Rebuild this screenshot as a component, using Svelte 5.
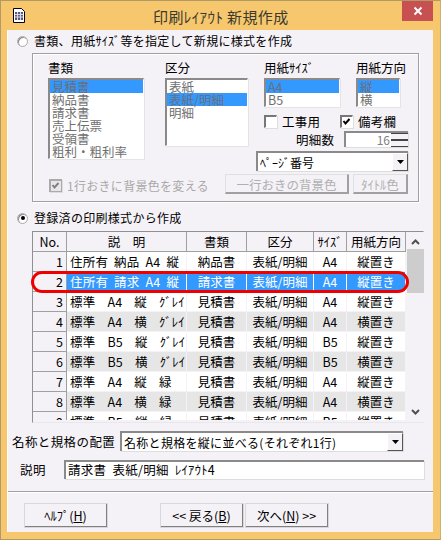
<script>
  const kinds = ['見積書', '納品書', '請求書', '売上伝票', '受領書', '粗利・粗利率'];
  const sections = ['表紙', '表紙/明細', '明細'];
  const rows = [
    ['1', '住所有 納品 A4 縦', '納品書', 'A4', '縦置き'],
    ['2', '住所有 請求 A4 縦', '請求書', 'A4', '縦置き'],
    ['3', '標準  A4  縦  ｸﾞﾚｲ', '見積書', 'A4', '縦置き'],
    ['4', '標準  A4  横  ｸﾞﾚｲ', '見積書', 'A4', '横置き'],
    ['5', '標準  B5  縦  ｸﾞﾚｲ', '見積書', 'B5', '縦置き'],
    ['6', '標準  B5  横  ｸﾞﾚｲ', '見積書', 'B5', '横置き'],
    ['7', '標準  A4  縦  緑', '見積書', 'A4', '縦置き'],
    ['8', '標準  A4  横  緑', '見積書', 'A4', '横置き'],
    ['9', '標準  B5  縦  緑', '見積書', 'B5', '縦置き']
  ];
</script>

<div class="window">
  <header class="titlebar">
    <svg class="appicon" width="14" height="15" viewBox="0 0 14 15">
      <path d="M1.500.500h8l3 3v11h-11z" fill="#fff" stroke="#000"/>
      <rect x="3" y="4" width="8" height="8" fill="#5a5a78"/>
      <path d="M3 6.500h8M3 9h8M5.500 4v8M8.500 4v8" stroke="#d8d8e8" stroke-width="1"/>
    </svg>
    <div class="title">印刷ﾚｲｱｳﾄ 新規作成</div>
    <div class="close">
      <svg width="10" height="10" viewBox="0 0 10 10"><path d="M1.500 1.500l7 7M8.500 1.500l-7 7" stroke="#fff" stroke-width="2"/></svg>
    </div>
  </header>

  <main class="client">
    <label class="radio-row first"><span class="radio"></span>書類、用紙ｻｲｽﾞ等を指定して新規に様式を作成</label>

    <section class="group">
      <div class="lists">
        <div class="col w-kind">
          <div class="cap">書類</div>
          <div class="list h-kind">
            {#each kinds as k, i}<div class="opt" class:sel={i === 0}>{k}</div>{/each}
          </div>
        </div>
        <div class="col w-sec">
          <div class="cap">区分</div>
          <div class="list h-sec">
            {#each sections as k, i}<div class="opt" class:sel={i === 1}>{k}</div>{/each}
          </div>
        </div>
        <div class="side">
          <div class="side-top">
            <div class="col w-size">
              <div class="cap">用紙ｻｲｽﾞ</div>
              <div class="list h-size">
                <div class="opt sel latin">A4</div>
                <div class="opt latin">B5</div>
              </div>
            </div>
            <div class="col w-dir">
              <div class="cap">用紙方向</div>
              <div class="list h-size">
                <div class="opt sel">縦</div>
                <div class="opt">横</div>
              </div>
            </div>
          </div>
          <div class="checks">
            <label class="check-row w-koji"><span class="check"></span>工事用</label>
            <label class="check-row"><span class="check"><svg width="11" height="11" viewBox="0 0 11 11"><path d="M2.500 5l2 2.500L8.500 3" fill="none" stroke="#000" stroke-width="2"/></svg></span>備考欄</label>
          </div>
          <div class="count-row">
            <span class="count-label">明細数</span>
            <div class="spin"><span class="spin-val">16</span><span class="spin-btns"><i></i><i></i></span></div>
          </div>
          <div class="combo page-combo">
            <span class="combo-text">ﾍﾟｰｼﾞ番号</span>
            <span class="combo-btn"><svg width="7" height="4" viewBox="0 0 7 4"><path d="M0 0h7L3.500 4z" fill="#000"/></svg></span>
          </div>
        </div>
      </div>
      <div class="alt-row">
        <label class="alt-check">
          <span class="check disabled"><svg width="11" height="11" viewBox="0 0 11 11"><path d="M2.500 5l2 2.500L8.500 3" fill="none" stroke="#808080" stroke-width="2"/></svg></span>1行おきに背景色を変える
        </label>
        <button class="btn dis wide" disabled>一行おきの背景色</button>
        <button class="btn dis narrow" disabled>ﾀｲﾄﾙ色</button>
      </div>
    </section>

    <label class="radio-row second"><span class="radio on"></span>登録済の印刷様式から作成</label>

    <section class="table">
      <div class="grid-area">
        <div class="tr head">
          <div class="td">No.</div>
          <div class="td">説　明</div>
          <div class="td">書類</div>
          <div class="td">区分</div>
          <div class="td">ｻｲｽﾞ</div>
          <div class="td">用紙方向</div>
        </div>
        {#each rows as r, i}
          <div class="tr" class:alt={i > 1 && i % 2 === 1} class:selected={i === 1}>
            <div class="td no">{r[0]}</div>
            <div class="td name">{r[1]}</div>
            <div class="td">{r[2]}</div>
            <div class="td">表紙/明細</div>
            <div class="td">{r[3]}</div>
            <div class="td">{r[4]}</div>
          </div>
        {/each}
      </div>
      <div class="scrollbar">
        <svg class="arrow" width="9" height="6" viewBox="0 0 9 6"><path d="M1 5l3.500-3.500L8 5" fill="none" stroke="#505050" stroke-width="2"/></svg>
        <div class="thumb"></div>
        <svg class="arrow down" width="9" height="6" viewBox="0 0 9 6"><path d="M1 1l3.500 3.500L8 1" fill="none" stroke="#505050" stroke-width="2"/></svg>
      </div>
      <div class="ring"></div>
    </section>

    <div class="form-row one">
      <span class="form-label">名称と規格の配置</span>
      <div class="combo layout-combo">
        <span class="combo-text">名称と規格を縦に並べる(それぞれ1行)</span>
        <span class="combo-btn"><svg width="7" height="4" viewBox="0 0 7 4"><path d="M0 0h7L3.500 4z" fill="#000"/></svg></span>
      </div>
    </div>
    <div class="form-row two">
      <span class="form-label short">説明</span>
      <div class="input">請求書 表紙/明細 ﾚｲｱｳﾄ4</div>
    </div>

    <div class="divider"></div>

    <footer class="footer">
      <button class="btn foot help">ﾍﾙﾌﾟ(<u>H</u>)</button>
      <button class="btn foot">&lt;&lt; 戻る(<u>B</u>)</button>
      <button class="btn foot">次へ(<u>N</u>) &gt;&gt;</button>
    </footer>
  </main>
</div>

<style>
  :global(body) { margin: 0; background: #f6c76c; }
  .window {
    width: 441px; height: 540px; box-sizing: border-box;
    background: #f6c76c; border: 1px solid #b09a68; border-right-color: #c8b078;
    display: flex; flex-direction: column;
    font-family: "Noto Sans CJK JP", "Liberation Sans", sans-serif;
    font-size: 12px; color: #000; overflow: hidden;
  }
  .titlebar { height: 29px; display: flex; flex: none; align-items: flex-start; }
  .appicon { margin: 7px 0 0 11px; flex: none; }
  .title {
    margin: 6px 0 0 127px;
    font-size: 15px; letter-spacing: .4px; line-height: 20px; color: #3a3a30; white-space: nowrap;
  }
  .close {
    margin: 0 7px 0 auto; width: 31px; height: 20px; flex: none;
    background: #c75050; display: flex; align-items: center; justify-content: center;
  }
  .client {
    flex: none; margin: 0 7px 0 6px; height: 502px; box-sizing: border-box;
    background: #f5f2f7; border-left: 1px solid #fff;
    display: flex; flex-direction: column;
  }
  .radio-row { display: flex; align-items: center; height: 16px; letter-spacing: .3px; line-height: 16px; white-space: nowrap; }
  .first { margin: 3px 0 0 9px; }
  .second { margin: 8px 0 0 9px; }
  .radio {
    width: 11px; height: 11px; border-radius: 50%; margin-right: 6px; box-sizing: border-box; background: #fff;
    border: 1px solid #aaa; flex: none; display: flex; align-items: center; justify-content: center;
    box-shadow: inset 1px 1px 0 #888;
  }
  .radio.on::after { content: ""; width: 4px; height: 4px; border-radius: 50%; background: #000; }
  .group {
    margin: 4px 0 0 24px; width: 387px; height: 149px; box-sizing: border-box;
    border: 1px solid #a0a0a0; box-shadow: 1px 1px 0 #fff, inset 1px 1px 0 #fff;
    padding: 6px 0 0 15px;
  }
  .lists { display: flex; height: 111px; }
  .col { display: flex; flex-direction: column; flex: none; }
  .w-kind { width: 96px; margin-right: 21px; }
  .w-sec { width: 83px; margin-right: 16px; }
  .w-size { width: 76px; margin-right: 16px; }
  .w-dir { width: 44px; }
  .cap { height: 18px; line-height: 15px; font-size: 12.500px; white-space: nowrap; }
  .side { display: flex; flex-direction: column; }
  .side-top { display: flex; }
  .list {
    box-sizing: border-box; background: #fff; border: 1px solid #fff;
    border-top: 2px solid #8a8a8a; border-left: 2px solid #8a8a8a;
    box-shadow: 1px 1px 0 #e4e4e4; color: #707070;
  }
  .h-kind { height: 81px; }
  .h-sec { height: 68px; }
  .h-size { height: 29px; }
  .opt { height: 13px; line-height: 13px; font-size: 12.500px; padding-left: 2px; white-space: nowrap; }
  .opt.sel { background: #3399ff; color: #6a6f7c; }
  .h-size .opt { height: 13px; line-height: 13px; }
  .checks { display: flex; margin-top: 8px; height: 13px; align-items: center; }
  .check-row { display: flex; align-items: center; font-size: 12.500px; letter-spacing: .3px; }
  .w-koji { width: 76px; }
  .check {
    width: 13px; height: 13px; box-sizing: border-box; flex: none; margin-right: 5px;
    background: #fff; border: 1px solid #fff; border-top: 2px solid #777; border-left: 2px solid #777;
    display: flex; align-items: center; justify-content: center; box-shadow: 1px 1px 0 #ddd;
  }
  .check svg { flex: none; margin: -1px 0 0 -1px; }
  .check.disabled { background: #e8e6ea; border-color: #aaa; }
  .count-row { display: flex; align-items: center; margin-top: 3px; height: 16px; }
  .count-label { margin-left: 32px; width: 48px; font-size: 12.500px; letter-spacing: .3px; }
  .spin {
    width: 64px; height: 16px; box-sizing: border-box; display: flex; justify-content: flex-end;
    background: #fff; border-top: 2px solid #8a8a8a; border-left: 2px solid #8a8a8a; box-shadow: 1px 1px 0 #ddd;
  }
  .spin-val { color: #808080; font-size: 12px; line-height: 14px; margin-right: 1px; }
  .spin-btns { width: 17px; display: flex; flex-direction: column; }
  .spin-btns i { flex: 1; background: #f5f2f7; border-bottom: 1px solid #444; border-top: 1px solid #444; }
  .combo {
    box-sizing: border-box; background: #fff; display: flex; align-items: center; justify-content: space-between;
    border-top: 2px solid #8a8a8a; border-left: 2px solid #8a8a8a; box-shadow: 1px 1px 0 #ddd;
  }
  .page-combo { margin: 4px 0 0 -8px; width: 152px; height: 20px; flex: none; }
  .combo-text { padding-left: 2px; white-space: nowrap; letter-spacing: .3px; }
  .page-combo .combo-text { letter-spacing: 0; }
  .combo-btn {
    width: 16px; height: 100%; box-sizing: border-box; background: #f5f2f7; display: flex; align-items: center; justify-content: center;
    border: 1px solid #fff; border-right-color: #555; border-bottom-color: #555; flex: none;
  }
  .alt-row { margin: 3px 0 0 1px; display: flex; align-items: center; height: 20px; }
  .alt-check { display: flex; align-items: center; width: 176px; padding-top: 2px; color: #a8a8a8; letter-spacing: .3px; white-space: nowrap; }
  .btn {
    font: inherit; color: #000; background: #f5f2f7; padding: 0; box-sizing: border-box; flex: none;
    border: 1px solid #fff; border-right: 2px solid #808080; border-bottom: 2px solid #808080;
    outline: 1px solid #d8d8d8; outline-offset: -1px;
  }
  .dis { color: #b0b0b0; height: 20px; outline: none; border-color: #e0e0e0 #a0a0a0 #a0a0a0 #e0e0e0; }
  .wide { width: 124px; margin-right: 4px; font-size: 12.500px; }
  .narrow { width: 55px; font-size: 12.500px; }
  .table {
    margin: 5px 0 0 24px; width: 392px; height: 192px; box-sizing: border-box; display: flex; position: relative;
    border-top: 1px solid #909090; border-left: 1px solid #909090; border-right: 1px solid #e8e8e8; border-bottom: 1px solid #e8e8e8;
  }
  .grid-area { width: 373px; height: 188px; overflow: hidden; flex: none; }
  .tr { display: grid; grid-template-columns: 34px 120px 60px 67px 33px 59px; height: 20px; box-sizing: border-box; border-bottom: 1px solid #f5f2f7; background: #fff; }
  .tr.head { background: #f5f2f7; border-bottom: 1px solid #a0a0a0; }
  .td { box-sizing: border-box; text-align: center; line-height: 19px; white-space: nowrap; border-right: 1px solid #f5f2f7; font-size: 12.500px; overflow: hidden; }
  .head .td { border-right: 1px solid #a0a0a0; }
  .no { background: #f5f2f7; text-align: right; padding-right: 3px; border-right: 1px solid #a0a0a0; border-bottom: 1px solid #a0a0a0; height: 20px; }
  .name { text-align: left; padding-left: 3px; white-space: pre; word-spacing: 3px; letter-spacing: .2px; }
  .alt { background: #e6e6e6; }
  .selected { background: #3399ff; color: #fff; }
  .selected .no { color: #000; }
  .selected .td:not(.no) { border-right-color: #fff; }
  .scrollbar { width: 17px; flex: none; background: #f4f2f6; margin-left: 1px; display: flex; flex-direction: column; align-items: center; }
  .arrow { margin-top: 7px; flex: none; }
  .thumb { width: 100%; height: 44px; background: #cdcdcd; margin-top: 4px; flex: none; }
  .arrow.down { margin: auto 0 7px; }
  .ring {
    position: absolute; left: -2px; top: 39px; width: 378px; height: 22px; box-sizing: border-box;
    border: 3px solid #ee0000; border-radius: 11px; pointer-events: none;
  }
  .form-row { display: flex; align-items: center; }
  .one { margin: 8px 0 0 4px; height: 20px; }
  .two { margin: 9px 0 0 12px; height: 19px; }
  .form-label { width: 108px; letter-spacing: .4px; font-size: 12.500px; white-space: nowrap; flex: none; }
  .short { width: 44px; }
  .layout-combo { width: 283px; height: 20px; }
  .input {
    width: 360px; height: 19px; box-sizing: border-box; background: #fff; line-height: 16px; padding-left: 2px;
    font-size: 12.500px; letter-spacing: .3px; word-spacing: 3px;
    border-top: 2px solid #8a8a8a; border-left: 2px solid #8a8a8a; box-shadow: 1px 1px 0 #ddd; white-space: nowrap;
  }
  .divider { margin-top: 12px; height: 1px; background: #a0a0a0; box-shadow: 0 1px 0 #fff; flex: none; }
  .footer { display: flex; margin: 11px 0 0 16px; }
  .foot { width: 84px; height: 25px; margin-right: 1px; font-size: 12.500px; }
  .help { margin-right: 52px; }
</style>
